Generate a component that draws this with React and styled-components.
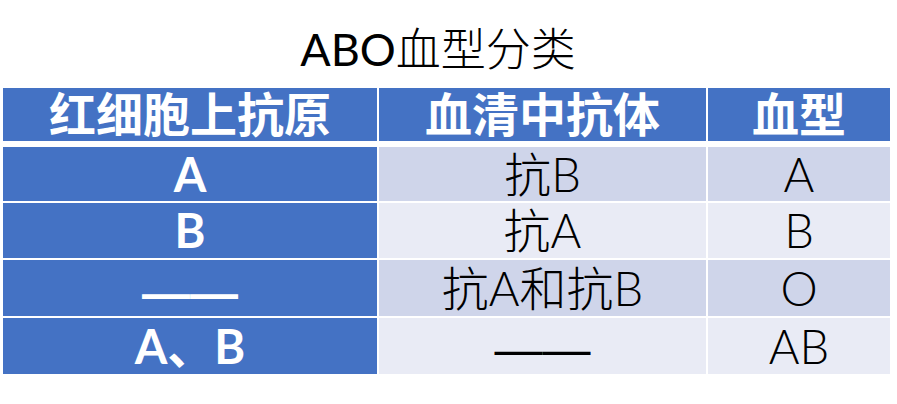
import React from "react";
import styled, { createGlobalStyle } from "styled-components";

const GlobalStyle = createGlobalStyle`
  html, body {
    margin: 0;
    padding: 0;
    background: #ffffff;
  }
  body {
    font-family: Lato, "Noto Sans CJK SC", sans-serif;
  }
`;

const Page = styled.div`
  width: 897px;
  height: 404px;
  padding: 0 6px 0 3px;
  box-sizing: border-box;
  display: flex;
  flex-direction: column;
`;

const Title = styled.div`
  height: 88px;
  display: flex;
  align-items: center;
  justify-content: center;
  padding-right: 18px;
  padding-top: 10px;
  box-sizing: border-box;
  font-size: 45px;
  font-weight: 400;
  color: #000000;
  line-height: 1;
`;

const TitleCjk = styled.span`
  font-weight: 300;
`;

const Table = styled.div`
  display: flex;
  flex-direction: column;
  gap: 2px;
`;

const Row = styled.div`
  display: grid;
  grid-template-columns: 374px 327px 182px;
  column-gap: 2px;
  height: ${(p) => p.$height}px;
  margin-bottom: ${(p) => (p.$head ? 4 : 0)}px;
`;

const Cell = styled.div`
  display: flex;
  align-items: center;
  justify-content: center;
  line-height: 1;
  font-size: 47px;
  background: ${(p) => p.$bg};
  color: ${(p) => (p.$light ? "#ffffff" : "#000000")};
  font-weight: ${(p) => (p.$bold ? 700 : 300)};
`;

const Dash = styled.span`
  font-family: "Liberation Sans", sans-serif;
  font-size: 48px;
  position: relative;
  top: ${(p) => (p.$bold ? 6 : 4)}px;
`;

const BLUE = "#4472c4";
const DARK = "#cfd5ea";
const LIGHT = "#e9ebf5";

const rows = [
  { a: "A", b: "抗B", c: "A", bg: DARK, h: 54 },
  { a: "B", b: "抗A", c: "B", bg: LIGHT, h: 55 },
  { a: "——", b: "抗A和抗B", c: "O", bg: DARK, h: 56 },
  { a: "A、B", b: "——", c: "AB", bg: LIGHT, h: 56 },
];

const content = (text, bold) =>
  text === "——" ? <Dash $bold={bold}>{text}</Dash> : text;

export default function App() {
  return (
    <Page>
      <GlobalStyle />
      <Title>
        ABO<TitleCjk>血型分类</TitleCjk>
      </Title>
      <Table>
        <Row $head $height={53}>
          <Cell $bg={BLUE} $light $bold>红细胞上抗原</Cell>
          <Cell $bg={BLUE} $light $bold>血清中抗体</Cell>
          <Cell $bg={BLUE} $light $bold>血型</Cell>
        </Row>
        {rows.map((r, i) => (
          <Row key={i} $height={r.h}>
            <Cell $bg={BLUE} $light $bold>
              {content(r.a, true)}
            </Cell>
            <Cell $bg={r.bg}>{content(r.b, false)}</Cell>
            <Cell $bg={r.bg}>{r.c}</Cell>
          </Row>
        ))}
      </Table>
    </Page>
  );
}
